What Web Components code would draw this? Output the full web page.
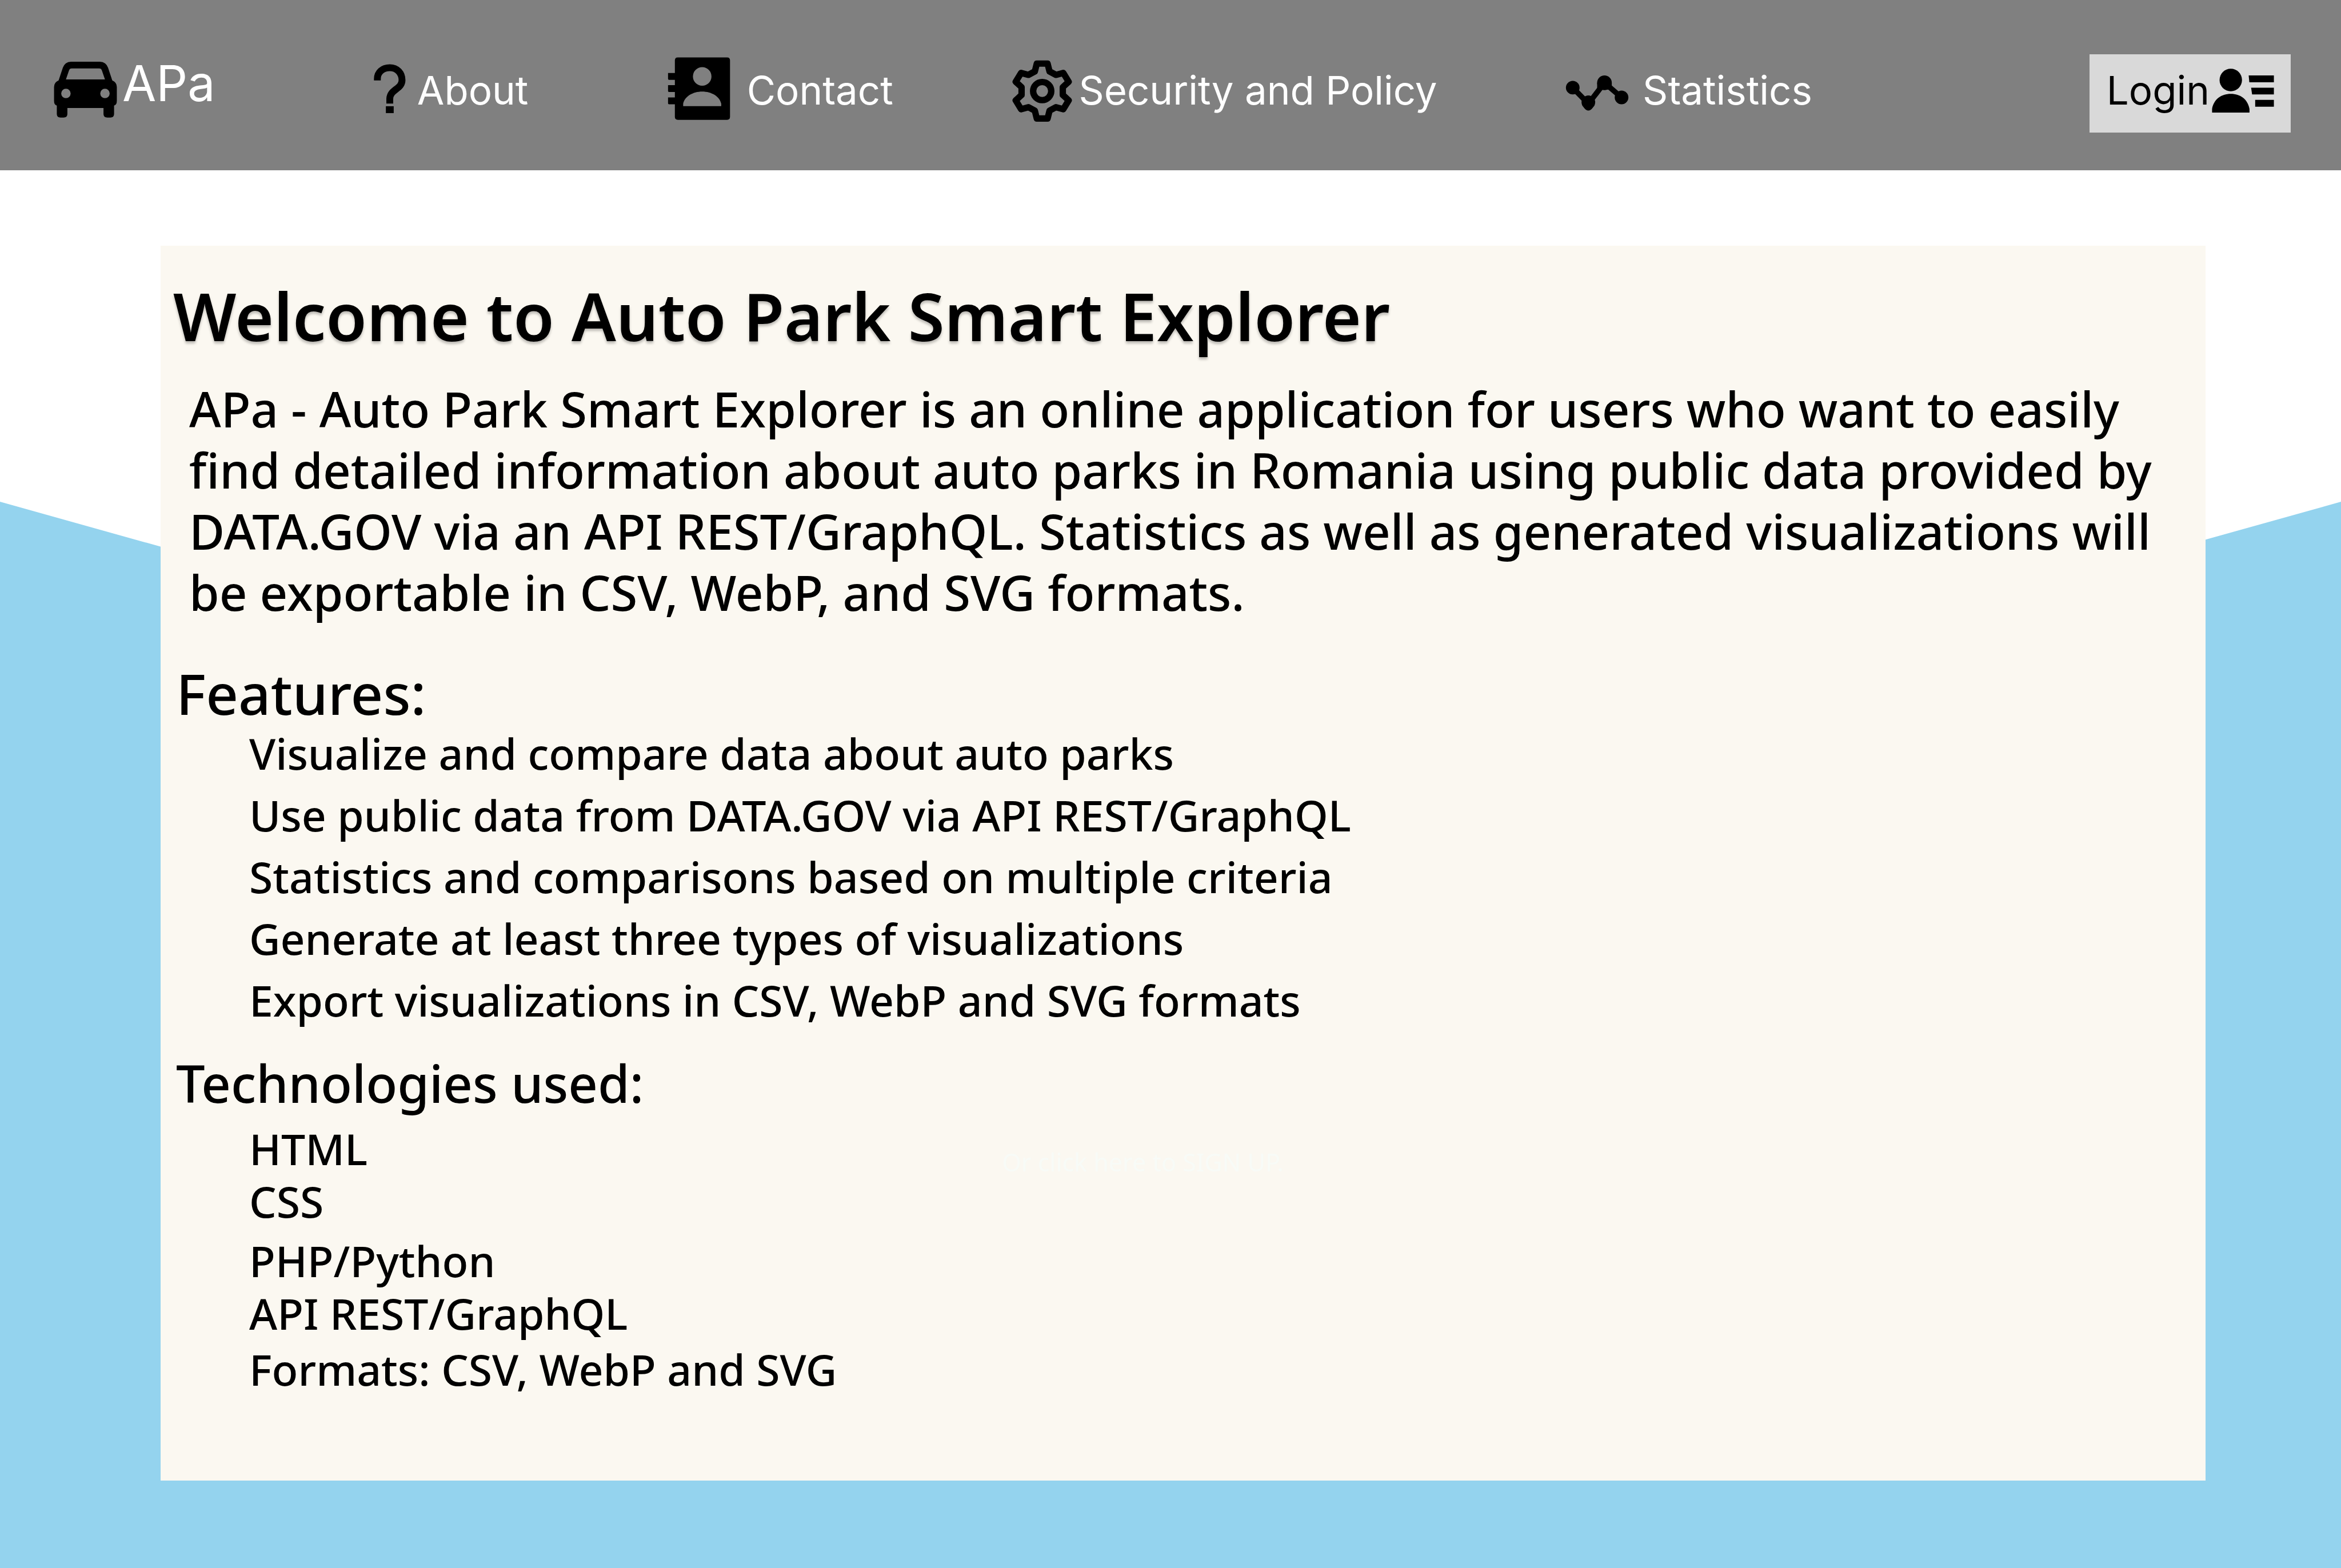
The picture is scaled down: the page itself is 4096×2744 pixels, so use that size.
<!DOCTYPE html>
<html lang="en">
<head>
<meta charset="utf-8">
<title>APa - Auto Park Smart Explorer</title>
<style>
  html, body { margin: 0; height: 100%; }
  body { background: #fff; font-family: "Noto Sans", "Open Sans", sans-serif; font-weight: 500; color: #000; --list-size: 75px; }
</style>
</head>
<body>
<apa-page>
  <apa-header slot="header">
    <apa-link slot="brand" brand icon="car" href="#home" style="--gap:9px">APa</apa-link>
    <apa-link icon="question" href="#about" style="--gap:18px">About</apa-link>
    <apa-link icon="contacts" href="#contact" style="--gap:28px">Contact</apa-link>
    <apa-link icon="gear" href="#security" style="--gap:12px">Security and Policy</apa-link>
    <apa-link icon="chart" href="#statistics" style="--gap:24px">Statistics</apa-link>
    <apa-login slot="action">Login</apa-login>
  </apa-header>
  <apa-panel>
    <span slot="title">Welcome to Auto Park Smart Explorer</span>
    <span slot="intro">APa - Auto Park Smart Explorer is an online application for users who want to easily find detailed information about auto parks in Romania using public data provided by DATA.GOV via an API REST/GraphQL. Statistics as well as generated visualizations will be exportable in CSV, WebP, and SVG formats.</span>
    <apa-features></apa-features>
    <apa-technologies></apa-technologies>
  </apa-panel>
</apa-page>

<script>
const define = (name, html, setup) => {
  const template = document.createElement('template');
  template.innerHTML = html;
  customElements.define(name, class extends HTMLElement {
    connectedCallback() {
      if (this.shadowRoot) return;
      this.attachShadow({ mode: 'open' }).append(template.content.cloneNode(true));
      if (setup) setup(this, this.shadowRoot);
    }
  });
};

const icons = {
  car: ['90 45 390 450', 111, `<path fill-rule="evenodd" d="M196 135H374Q412 137 424 172L450 250Q478 262 478 290V375Q478 400 461 404V456Q461 478 438 478H420Q396 478 396 456V419H174V456Q174 478 150 478H132Q109 478 109 456V404Q92 400 92 375V290Q92 262 120 250L146 172Q158 137 196 135ZM201 176Q188 176 184 188L165 244H405L386 188Q382 176 369 176ZM194 330A29 29 0 1 0 136 330A29 29 0 1 0 194 330ZM434 330A29 29 0 1 0 376 330A29 29 0 1 0 434 330Z"/>`],
  question: ['120 87 210 450', 60, `<path fill="none" stroke="#000" stroke-width="42" d="M149 250V240C149 200 180 172 225 172C270 172 300 205 300 248C300 305 227 302 225 362V392"/><path d="M201 408H249V450H201Z"/>`],
  contacts: ['1360 109 130 150', 111, `<path fill-rule="evenodd" d="M1381 116H1482Q1488 116 1488 122V238Q1488 244 1482 244H1381Q1375 244 1375 238V122Q1375 116 1381 116ZM1450 155A19 19 0 1 0 1412 155A19 19 0 1 0 1450 155ZM1392 216H1470V211C1467 196 1450 186 1431 186S1395 196 1392 211Z"/><path d="M1361 148H1376V162H1363Q1361 162 1361 160ZM1361 173H1376V187H1363Q1361 187 1361 185ZM1361 198H1376V212H1363Q1361 212 1361 210Z"/>`],
  gear: ['-60 -76 120 150', 103, `<g fill="none" stroke="#000" stroke-linejoin="round"><path stroke-width="13" d="M-15-40-11-56H11L15-40 28-33 43-37 54-19 42-8V8L54 19 43 37 28 33 15 40 11 56H-11L-15 40-28 33-43 37-54 19-42 8V-8L-54-19-43-37-28-33Z"/><circle r="18.500" stroke-width="13"/></g>`],
  chart: ['3192 109 130 150', 111, `<path fill="none" stroke="#000" stroke-width="11" d="M3207 178L3239 211 3272 168 3307 198"/><circle cx="3207" cy="178" r="14"/><circle cx="3239" cy="208" r="14"/><path d="M3226 202L3230 219Q3239 231 3248 219L3252 202Z"/><circle cx="3272" cy="168" r="15"/><path d="M3257 168V182H3287V168Z"/><circle cx="3307" cy="198" r="14"/>`],
  user: ['870 87 390 450', 111, `<circle cx="990" cy="247" r="69"/><path d="M875 447V425C885 365 932 332 990 332S1095 365 1105 425V447ZM1100 219H1255V261H1104ZM1115 294H1255V336H1121ZM1140 369H1255V411H1140Z"/>`]
};

define('apa-icon', `
  <style>:host{display:block;flex:none} svg{display:block;height:129px;overflow:visible}</style>
  <svg aria-hidden="true"></svg>`, (host, root) => {
  const [box, width, shapes] = icons[host.getAttribute('name')];
  const svg = root.querySelector('svg');
  svg.setAttribute('viewBox', box);
  svg.setAttribute('width', width);
  svg.innerHTML = shapes;
});

define('apa-link', `
  <style>
    :host{display:block}
    a{display:flex;align-items:center;gap:var(--gap);color:#fff;text-decoration:none;white-space:nowrap;font-size:69px;line-height:84px}
    :host([brand]) a{font-size:86px;padding-bottom:24px}
  </style>
  <a><span><slot></slot></span></a>`, (host, root) => {
  const link = root.querySelector('a');
  link.setAttribute('href', host.getAttribute('href'));
  const icon = document.createElement('apa-icon');
  icon.setAttribute('name', host.getAttribute('icon'));
  link.prepend(icon);
});

define('apa-login', `
  <style>
    :host{display:block;padding-top:10px}
    button{display:flex;align-items:center;gap:3px;height:137px;margin:0;padding:0 28px 10px 30px;border:0;background:#d9d9d9;color:#000;font:inherit;font-size:69px;line-height:84px}
  </style>
  <button type="button"><span><slot></slot></span><apa-icon name="user"></apa-icon></button>`);

define('apa-header', `
  <style>
    :host{display:block;background:#808080;font-family:Inter,"Liberation Sans",sans-serif;font-weight:400}
    header{box-sizing:border-box;display:flex;align-items:center;height:298px;padding:18px 88px 0 94px}
    .brand{flex:558 1 0}
    nav{flex:3005 1 0;display:grid;align-items:center;grid-template-columns:516fr 605fr 967fr 917fr}
  </style>
  <header>
    <div class="brand"><slot name="brand"></slot></div>
    <nav aria-label="Main"><slot></slot></nav>
    <slot name="action"></slot>
  </header>`);

define('apa-panel', `
  <style>
    :host{display:block;box-sizing:border-box;background:#fbf8f1;padding:52px 0 153px 22px}
    h1{margin:0;font-size:116px;line-height:140px;font-weight:600;text-shadow:0 4px 4px rgba(0,0,0,.25)}
    p{margin:40px 40px 72px 28px;font-size:85px;line-height:107px}
  </style>
  <h1><slot name="title"></slot></h1>
  <p><slot name="intro"></slot></p>
  <slot></slot>`);

define('apa-features', `
  <style>
    :host{display:block;padding-left:5px}
    h2{margin:0;font-size:99px;line-height:102px;font-weight:500}
    ul{list-style:none;margin:0;padding:0 0 0 128px;font-size:var(--list-size);line-height:108px}
  </style>
  <h2>Features:</h2>
  <ul>
    <li>Visualize and compare data about auto parks</li>
    <li>Use public data from DATA.GOV via API REST/GraphQL</li>
    <li>Statistics and comparisons based on multiple criteria</li>
    <li>Generate at least three types of visualizations</li>
    <li>Export visualizations in CSV, WebP and SVG formats</li>
  </ul>`);

define('apa-technologies', `
  <style>
    :host{display:block;padding:36px 0 0 5px}
    h2{margin:0 0 18px;font-size:90px;line-height:110px;font-weight:500}
    .row{display:grid;grid-template-columns:1317fr 2105fr;padding-left:128px}
    ul{list-style:none;margin:0;padding:0;display:grid;grid-template-rows:84px 92px 104px 92px 98px;align-items:end;font-size:var(--list-size);line-height:84px;white-space:nowrap}
    a{justify-self:start;align-self:start;padding-top:38px;font-size:43px;line-height:56px;font-weight:400;color:#f8fbf7;text-decoration:none}
  </style>
  <h2>Technologies used:</h2>
  <div class="row">
    <ul>
      <li>HTML</li>
      <li>CSS</li>
      <li>PHP/Python</li>
      <li>API REST/GraphQL</li>
      <li>Formats: CSV, WebP and SVG</li>
    </ul>
    <a href="#signup">Or click here to SIGN UP.</a>
  </div>`);

define('apa-page', `
  <style>
    :host{display:flex;flex-direction:column;min-height:100%}
    main{flex:1;display:grid;grid-template-columns:281fr 3578fr 237fr}
    .wave{grid-area:1/1/2/4;margin-top:580px;background:#94d3ee;clip-path:polygon(0 0,50% 14vw,100% 0,100% 100%,0 100%)}
    .content{grid-area:1/2/2/3;position:relative;padding:132px 0 152px}
  </style>
  <slot name="header"></slot>
  <main>
    <div class="wave"></div>
    <div class="content"><slot></slot></div>
  </main>`);
</script>
</body>
</html>
